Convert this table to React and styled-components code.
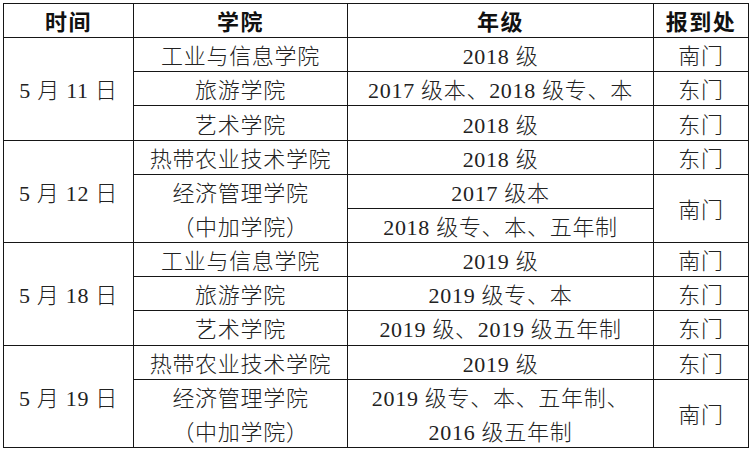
import styled, { createGlobalStyle } from "styled-components";

const GlobalStyle = createGlobalStyle`
  body {
    margin: 0;
    background: #ffffff;
  }
`;

const Page = styled.div`
  padding: 3px 0 0 3px;
  background: #ffffff;
`;

const Grid = styled.div`
  display: grid;
  grid-template-columns: 129px 213px 305px 94px;
  grid-template-rows: repeat(13, minmax(0, 1fr));
  gap: 1px;
  padding: 1px;
  width: 746px;
  height: 445px;
  box-sizing: border-box;
  background: #161616;
`;

const Cell = styled.div`
  background: #ffffff;
  display: flex;
  flex-direction: column;
  align-items: center;
  justify-content: center;
  min-height: 0;
  padding-top: 5px;
  box-sizing: border-box;
  font-family: "Liberation Serif", "Noto Sans CJK SC", serif;
  font-size: 22px;
  font-weight: ${(p) => (p.$head ? 700 : 300)};
  letter-spacing: ${(p) => (p.$head ? "1.5px" : "0.7px")};
  line-height: 34px;
  color: ${(p) => (p.$head ? "#111111" : "#222222")};
  white-space: nowrap;
  grid-row: ${(p) => (p.$span ? `span ${p.$span}` : "auto")};
`;

const Line = styled.span`
  display: block;
`;

const groups = [
  {
    date: "5 月 11 日",
    rows: [
      { college: ["工业与信息学院"], grade: ["2018 级"], gate: "南门" },
      { college: ["旅游学院"], grade: ["2017 级本、2018 级专、本"], gate: "东门" },
      { college: ["艺术学院"], grade: ["2018 级"], gate: "东门" },
    ],
  },
  {
    date: "5 月 12 日",
    rows: [
      { college: ["热带农业技术学院"], grade: ["2018 级"], gate: "东门" },
      {
        college: ["经济管理学院", "（中加学院）"],
        span: 2,
        grades: ["2017 级本", "2018 级专、本、五年制"],
        gate: "南门",
      },
    ],
  },
  {
    date: "5 月 18 日",
    rows: [
      { college: ["工业与信息学院"], grade: ["2019 级"], gate: "南门" },
      { college: ["旅游学院"], grade: ["2019 级专、本"], gate: "东门" },
      { college: ["艺术学院"], grade: ["2019 级、2019 级五年制"], gate: "东门" },
    ],
  },
  {
    date: "5 月 19 日",
    rows: [
      { college: ["热带农业技术学院"], grade: ["2019 级"], gate: "东门" },
      {
        college: ["经济管理学院", "（中加学院）"],
        span: 2,
        grade: ["2019 级专、本、五年制、", "2016 级五年制"],
        gate: "南门",
      },
    ],
  },
];

const Lines = ({ items }) => items.map((t) => <Line key={t}>{t}</Line>);

const App = () => {
  return (
    <Page>
      <GlobalStyle />
      <Grid>
        <Cell $head>时间</Cell>
        <Cell $head>学院</Cell>
        <Cell $head>年级</Cell>
        <Cell $head>报到处</Cell>

        {groups.map((g) => (
          <>
            <Cell key={g.date} $span={3}>
              {g.date}
            </Cell>
            {g.rows.map((r, i) =>
              r.grades ? (
                <>
                  <Cell key={`c${i}`} $span={2}>
                    <Lines items={r.college} />
                  </Cell>
                  <Cell key={`g${i}a`}>{r.grades[0]}</Cell>
                  <Cell key={`d${i}`} $span={2}>
                    {r.gate}
                  </Cell>
                  <Cell key={`g${i}b`}>{r.grades[1]}</Cell>
                </>
              ) : (
                <>
                  <Cell key={`c${i}`} $span={r.span}>
                    <Lines items={r.college} />
                  </Cell>
                  <Cell key={`g${i}`} $span={r.span}>
                    <Lines items={r.grade} />
                  </Cell>
                  <Cell key={`d${i}`} $span={r.span}>
                    {r.gate}
                  </Cell>
                </>
              )
            )}
          </>
        ))}
      </Grid>
    </Page>
  );
};

export default App;
